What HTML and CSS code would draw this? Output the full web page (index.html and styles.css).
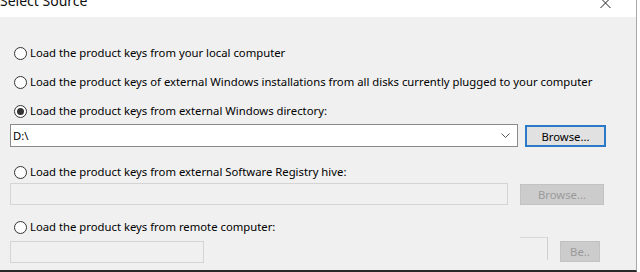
FILE: index.html
```html
<!DOCTYPE html>
<html>
<head>
<meta charset="utf-8">
<link rel="stylesheet" href="styles.css">
</head>
<body>
<div class="window">
  <div class="titlebar">
    <span class="title">Select Source</span>
    <svg class="close" width="11" height="10" viewBox="0 0 11 10"><path d="M0.5 -1 L10.5 9 M10.5 -1 L0.5 9" stroke="#222" stroke-width="1" fill="none"/></svg>
  </div>
  <div class="content">
    <label class="radio r1"><span class="dot"></span><span class="lbl">Load the product keys from your local computer</span></label>
    <label class="radio r2"><span class="dot"></span><span class="lbl">Load the product keys of external Windows installations from all disks currently plugged to your computer</span></label>
    <label class="radio r3"><span class="dot checked"></span><span class="lbl">Load the product keys from external Windows directory:</span></label>
    <div class="field-row f1">
      <div class="combo"><span class="val">D:\</span><svg class="chev" width="9" height="6" viewBox="0 0 9 6"><path d="M0.5 0.5 L4.5 4.5 L8.5 0.5" stroke="#555" fill="none"/></svg></div>
      <div class="btn primary">Browse...</div>
    </div>
    <label class="radio r4"><span class="dot"></span><span class="lbl">Load the product keys from external Software Registry hive:</span></label>
    <div class="field-row f2">
      <div class="input disabled wide"></div>
      <div class="btn disabled b2">Browse...</div>
    </div>
    <label class="radio r5"><span class="dot"></span><span class="lbl">Load the product keys from remote computer:</span></label>
    <div class="field-row f3">
      <div class="input disabled small"></div>
      <div class="ghost"></div>
      <div class="btn disabled b3">Be..</div>
    </div>
  </div>
</div>
</body>
</html>
```
FILE: styles.css
```css
html, body {
  margin: 0;
  padding: 0;
  background: #ffffff;
}
body {
  width: 640px;
  height: 272px;
  overflow: hidden;
  font-family: "Noto Sans", "Open Sans", sans-serif;
  font-size: 11.3px;
  color: #000;
}
.window {
  width: 636px;
  height: 270px;
  background: #f0f0f0;
  border-right: 1px solid #a8a8a8;
  border-bottom: 2px solid #2a2a2a;
  display: flex;
  flex-direction: column;
}
.titlebar {
  height: 17px;
  background: #ffffff;
  display: flex;
  justify-content: space-between;
  align-items: flex-start;
  overflow: hidden;
  padding-right: 25px;
}
.title {
  font-size: 14px;
  line-height: 14px;
  margin-top: -6px;
  color: #111;
}
.close {
  margin-top: -1px;
}
.content {
  display: flex;
  flex-direction: column;
  padding-left: 10px;
}
.radio {
  display: flex;
  align-items: center;
  height: 16px;
  padding-left: 4px;
  white-space: nowrap;
}
.dot {
  width: 11px;
  height: 11px;
  border: 1px solid #333;
  border-radius: 50%;
  background: #fff;
  display: flex;
  align-items: center;
  justify-content: center;
  flex: none;
}
.dot.checked::after {
  content: "";
  width: 7px;
  height: 7px;
  border-radius: 50%;
  background: #333;
}
.lbl {
  margin-left: 3px;
  line-height: 16px;
}
.r1 { margin-top: 28px; }
.r2 { margin-top: 13px; }
.r3 { margin-top: 13px; }
.f1 { margin-top: 5px; }
.r4 { margin-top: 17px; }
.f2 { margin-top: 3px; }
.r5 { margin-top: 14px; }
.f3 { margin-top: 6px; }
.field-row {
  display: flex;
  align-items: flex-start;
}
.combo {
  height: 21px;
  background: #fff;
  border: 1px solid #8a8a8a;
  display: flex;
  align-items: center;
  justify-content: space-between;
  padding: 0 7px 0 2px;
  box-sizing: content-box;
  width: 497px;
}
.val {
  line-height: 21px;
}
.btn {
  display: flex;
  align-items: center;
  justify-content: center;
  box-sizing: border-box;
}
.btn.primary {
  margin-left: 7px;
  width: 81px;
  height: 22px;
  margin-top: 1px;
  background: #e1e1e1;
  border: 2px solid #2b7ac7;
}
.input.disabled {
  height: 22px;
  box-sizing: border-box;
  border: 1px solid #d4d4d4;
  background: #f0f0f0;
}
.wide { width: 498px; }
.small { width: 194px; }
.btn.disabled {
  background: #cccccc;
  border: 1px solid #c2c2c2;
  color: #9a9a9a;
}
.b2 {
  margin-left: 12px;
  width: 84px;
  height: 21px;
  margin-top: 1px;
}
.ghost {
  margin-left: 316px;
  width: 28px;
  height: 23px;
  margin-top: -4px;
  box-sizing: border-box;
  border-top: 1px solid #d8d8d8;
  border-right: 1px solid #cfcfcf;
}
.b3 {
  margin-left: 12px;
  width: 40px;
  height: 21px;
}
```
